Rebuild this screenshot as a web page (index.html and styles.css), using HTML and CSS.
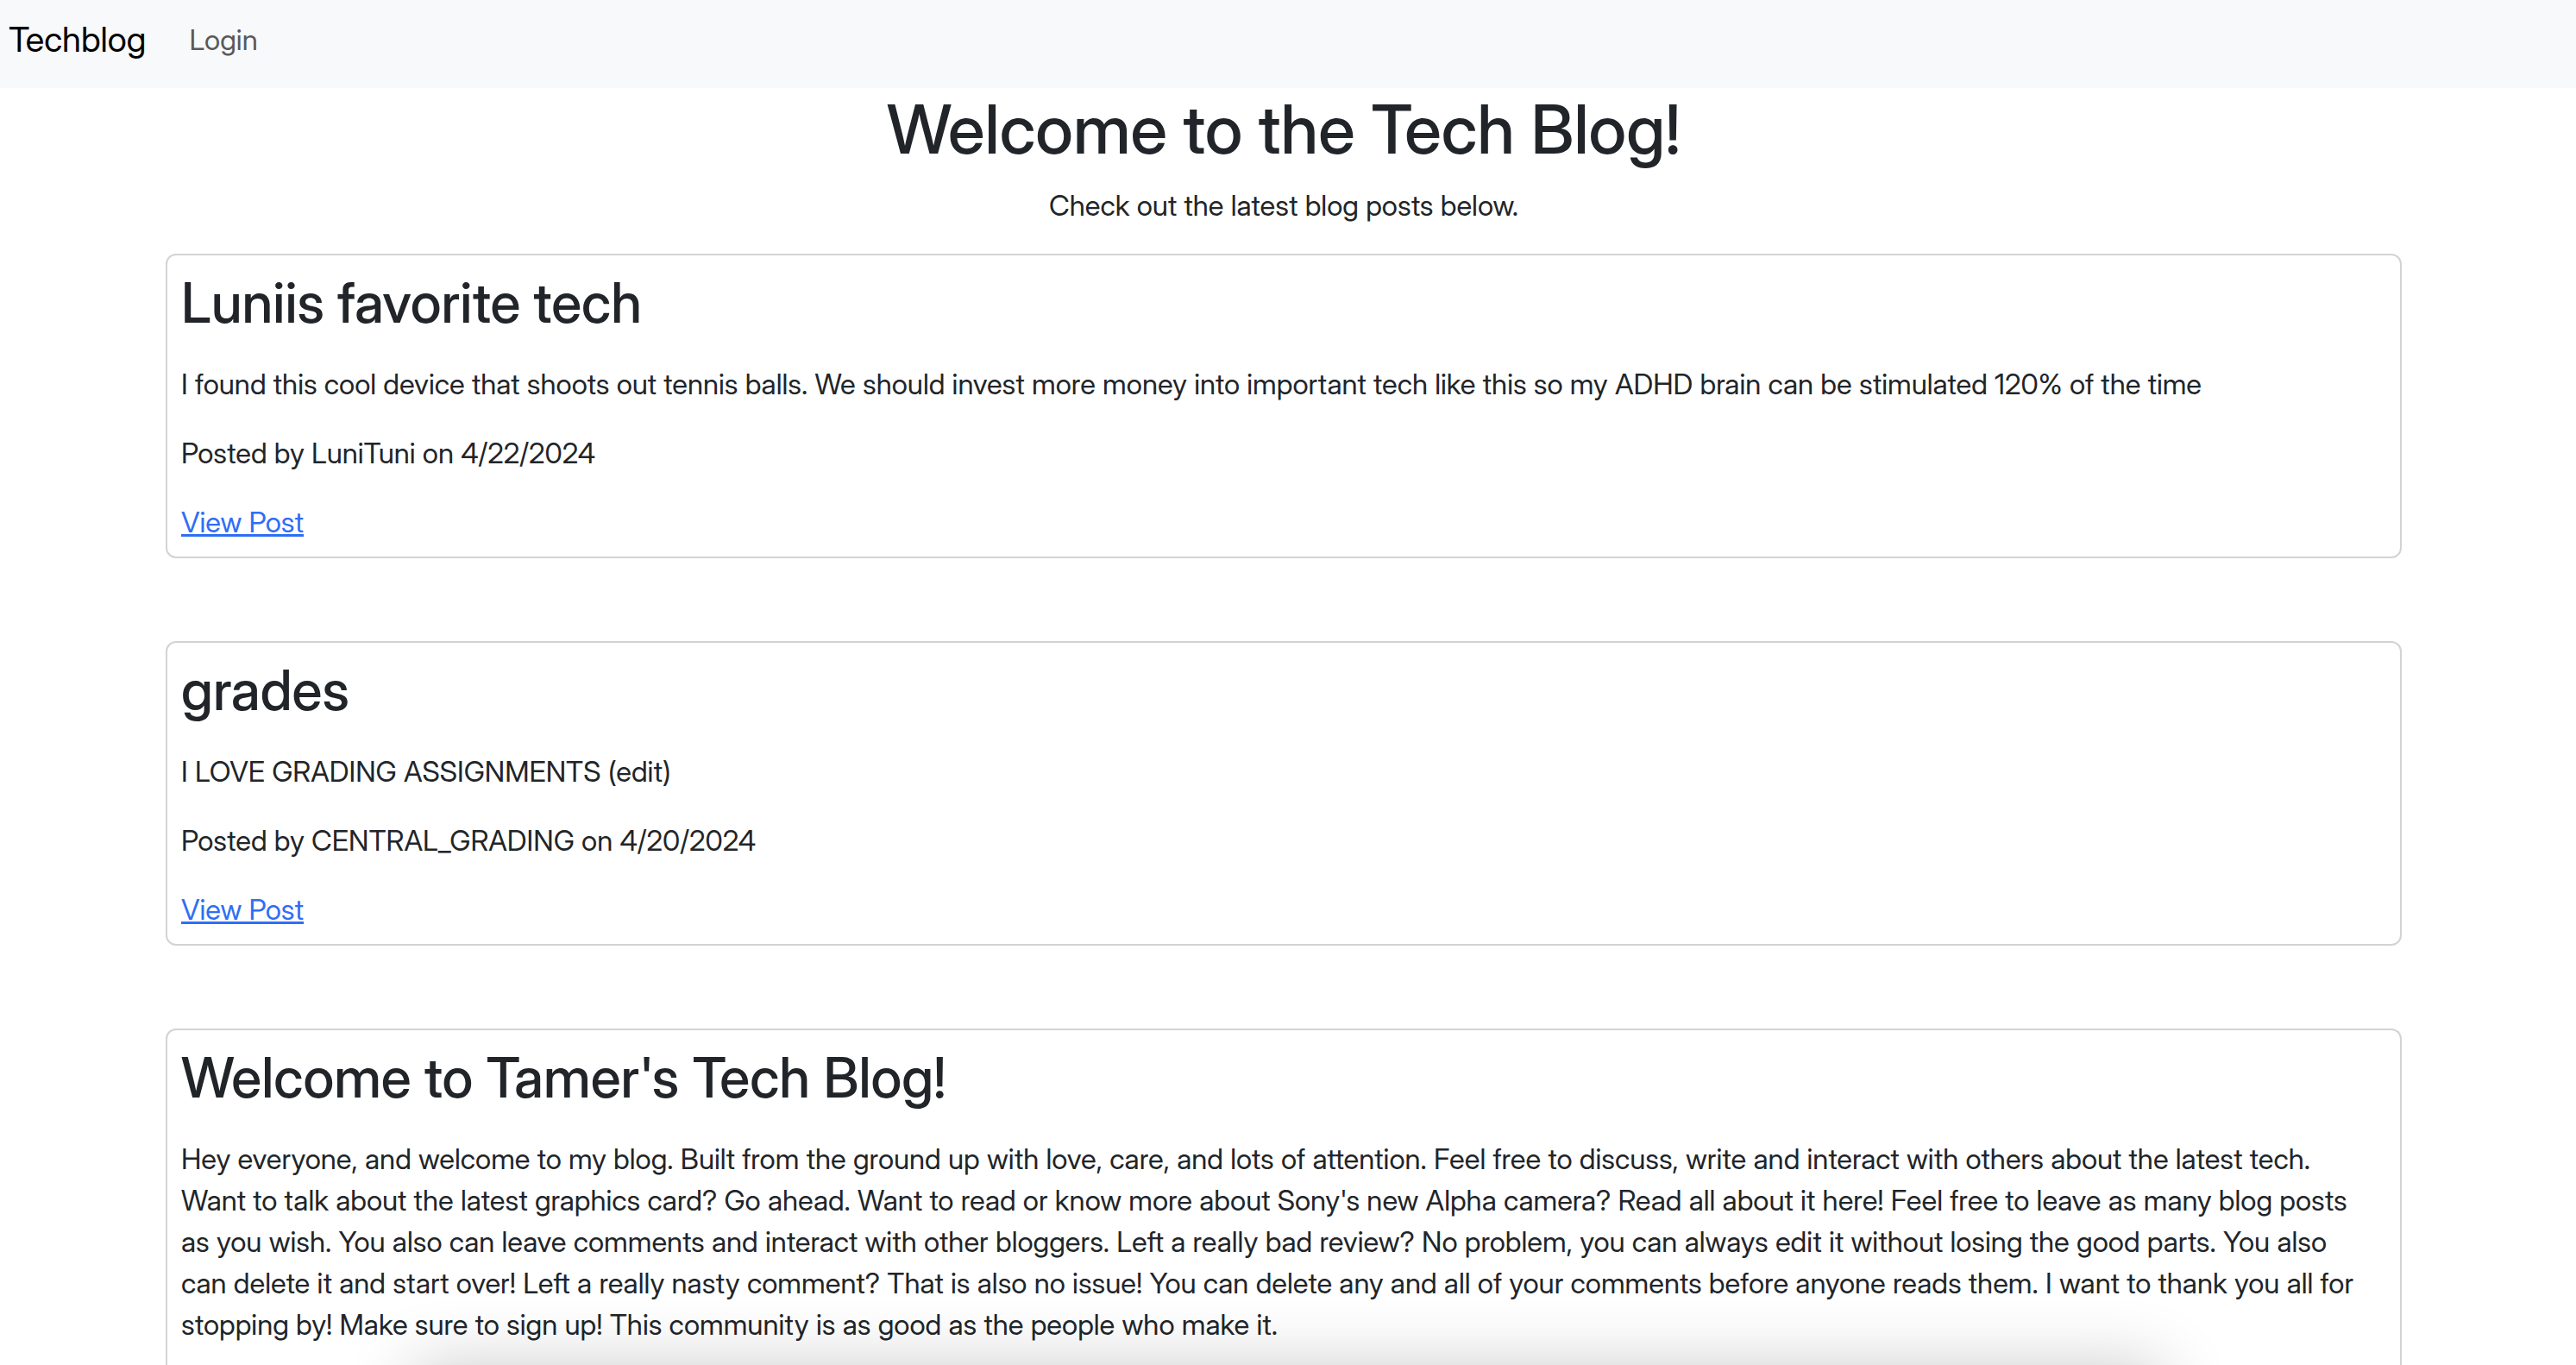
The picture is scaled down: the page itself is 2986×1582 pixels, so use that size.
FILE: index.html
```html
<!DOCTYPE html>
<html lang="en">
<head>
<meta charset="utf-8">
<meta name="viewport" content="width=device-width, initial-scale=1">
<title>Techblog</title>
<link rel="stylesheet" href="styles.css">
</head>
<body>
<nav class="navbar">
  <a class="navbar-brand" href="#">Techblog</a>
  <a class="nav-link" href="#">Login</a>
</nav>
<main class="container">
  <header class="intro">
    <h1>Welcome to the Tech Blog!</h1>
    <p>Check out the latest blog posts below.</p>
  </header>
  <article class="post">
    <h2>Luniis favorite tech</h2>
    <p>I found this cool device that shoots out tennis balls. We should invest more money into important tech like this so my ADHD brain can be stimulated 120% of the time</p>
    <p>Posted by LuniTuni on 4/22/2024</p>
    <a href="#">View Post</a>
  </article>
  <article class="post">
    <h2>grades</h2>
    <p>I LOVE GRADING ASSIGNMENTS (edit)</p>
    <p>Posted by CENTRAL_GRADING on 4/20/2024</p>
    <a href="#">View Post</a>
  </article>
  <article class="post post-last">
    <h2>Welcome to Tamer's Tech Blog!</h2>
    <p>Hey everyone, and welcome to my blog. Built from the ground up with love, care, and lots of attention. Feel free to discuss, write and interact with others about the latest tech.<br>
    Want to talk about the latest graphics card? Go ahead. Want to read or know more about Sony's new Alpha camera? Read all about it here! Feel free to leave as many blog posts<br>
    as you wish. You also can leave comments and interact with other bloggers. Left a really bad review? No problem, you can always edit it without losing the good parts. You also<br>
    can delete it and start over! Left a really nasty comment? That is also no issue! You can delete any and all of your comments before anyone reads them. I want to thank you all for<br>
    stopping by! Make sure to sign up! This community is as good as the people who make it.</p>
  </article>
</main>
<div class="dock-shadow"></div>
</body>
</html>
```
FILE: styles.css
```css
* {
  box-sizing: border-box;
}

body {
  display: flex;
  flex-direction: column;
  margin: 0;
  min-height: 100vh;
  background: #fff;
  color: #212529;
  font-family: "Inter Display", Inter, "Liberation Sans", sans-serif;
  font-size: 33px;
  line-height: 48px;
}

h1,
h2,
p {
  margin: 0;
}

h1,
h2 {
  font-weight: 500;
}

.navbar {
  display: flex;
  align-items: center;
  gap: 50px;
  padding: 16px 10px 26px;
  background: #f8f9fb;
}

.navbar a {
  text-decoration: none;
}

.navbar-brand {
  color: #000;
  font-size: 40px;
  line-height: 60px;
}

.nav-link {
  color: #595959;
}

.container {
  display: flex;
  flex: 1;
  flex-direction: column;
  width: 100%;
  max-width: 2650px;
  margin: 0 auto;
  padding: 0 34px 0 24px;
}

.intro {
  display: flex;
  flex-direction: column;
  gap: 16px;
  margin-bottom: 32px;
  text-align: center;
}

.intro h1 {
  font-size: 78px;
  line-height: 96px;
}

.post {
  margin-bottom: 96px;
  padding: 16px;
  border: 2px solid #d3d3d3;
  border-radius: 12px;
}

.post h2 {
  margin-bottom: 32px;
  font-size: 64px;
  line-height: 77px;
}

.post p:not(:last-child) {
  margin-bottom: 32px;
}

.post a {
  display: inline-block;
  color: #2f6ef6;
  text-decoration-thickness: 3px;
}

/* The last post runs on to the end of the page */
.post-last {
  flex: 1;
  margin-bottom: 0;
  border-bottom: 0;
  border-radius: 12px 12px 0 0;
}

/* Soft shadow cast over the bottom edge of the window */
.dock-shadow {
  position: fixed;
  top: 100%;
  left: 16%;
  right: 16%;
  height: 200px;
  box-shadow: 0 0 80px rgba(0, 0, 0, 0.2);
  pointer-events: none;
}
```
